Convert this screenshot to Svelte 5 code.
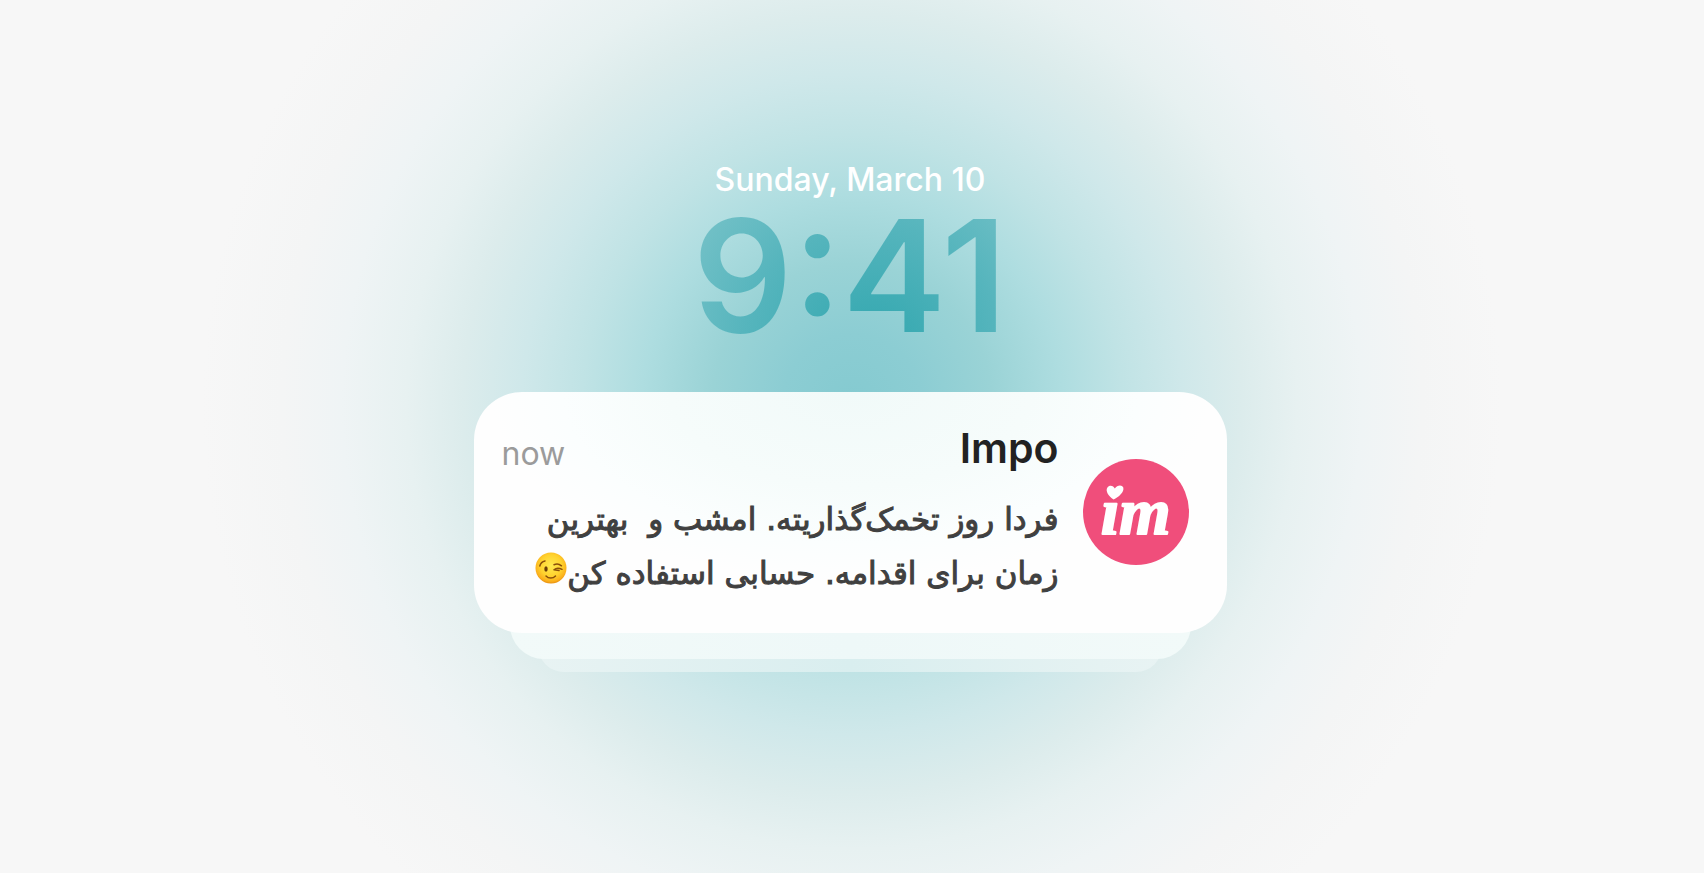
<script lang="ts">
  const date = 'Sunday, March 10';
  const time = '9:41';
  const line1 = 'فردا روز تخمک‌گذاریته. امشب و  بهترین';
  const line2 = 'زمان برای اقدامه. حسابی استفاده کن';
</script>

<main class="screen">
  <header class="lock">
    <p class="date">{date}</p>
    <time class="clock" datetime="09:41">{time}</time>
  </header>

  <section class="stack" aria-label="Notifications">
    <article class="card" dir="rtl">
      <svg class="logo" viewBox="0 0 106 106" role="img" aria-label="Impo">
        <circle cx="53" cy="53" r="53" fill="#f04e7b" />
        <text class="logo-text" x="18" y="75" direction="ltr">ım</text>
        <path d="M30.6 40.5 C25.5 37.4 22.2 32 24.3 28.7 C26.5 25.5 30.6 26.7 31.8 29.6 C34 26 39 25.3 40.3 28.6 C41.5 33 35.5 38.5 30.6 40.5 Z" fill="#fff" />
      </svg>
      <div class="content">
        <div class="head">
          <h1>Impo</h1>
          <span class="when">now</span>
        </div>
        <p class="message">
          <span class="line">{line1}</span>
          <span class="line">{line2}<svg class="wink" viewBox="0 0 32 32" role="img" aria-label="😉">
              <defs>
                <radialGradient id="face" cx="50%" cy="42%" r="58%">
                  <stop offset="0" stop-color="#ffe94f" />
                  <stop offset="0.6" stop-color="#ffd22e" />
                  <stop offset="0.88" stop-color="#fbb01c" />
                  <stop offset="1" stop-color="#e8900f" />
                </radialGradient>
              </defs>
              <circle cx="16" cy="16" r="15.5" fill="url(#face)" />
              <ellipse cx="11" cy="17" rx="1.7" ry="2.7" fill="#6b3d08" />
              <path d="M4.8 14 C5.6 11 7.6 9.5 10 9" />
              <path d="M19 12.8 C21.5 11.6 24.5 12.2 26.5 13.8" />
              <path d="M19 17.7 C21 16 24.5 16 27 17.3 M19 17.7 L24 18.6" />
              <path d="M11 24 C13.5 26.8 18 26.8 20.5 24" />
            </svg></span>
        </p>
      </div>
    </article>
    <div class="second"></div>
    <div class="third"></div>
  </section>
</main>

<style>
  :global(body) {
    margin: 0;
    background: #f7f7f7;
  }
  .screen {
    box-sizing: border-box;
    min-height: 100vh;
    padding: 160px 28px 80px 24px;
    display: flex;
    flex-direction: column;
    align-items: center;
    overflow: hidden;
    font-family: Inter, 'Liberation Sans', sans-serif;
    background: radial-gradient(
      circle at 50% 404px,
      #84cad0 0,
      #8ccdd3 70px,
      #9ad3d6 140px,
      #aedde0 210px,
      #c0e3e5 270px,
      #cfe8ea 330px,
      #dcecec 390px,
      #e7f1f1 445px,
      #eff4f5 510px,
      #f4f5f5 570px,
      #f7f7f7 650px
    );
  }
  .lock {
    display: flex;
    flex-direction: column;
    align-items: center;
  }
  .date {
    margin: 0;
    font-size: 32px;
    line-height: 40px;
    font-weight: 500;
    color: #fff;
  }
  .clock {
    font-size: 156px;
    line-height: 152px;
    font-weight: 600;
    color: transparent;
    background: radial-gradient(circle at 57% 100%, #32a6af 0, #3eacb4 50px, #56b5bd 130px, #76c2c8 220px);
    background-clip: text;
    -webkit-background-clip: text;
  }
  .stack {
    isolation: isolate;
    width: 100%;
    max-width: 753px;
    margin-top: 40px;
    display: flex;
    flex-direction: column;
    align-items: center;
  }
  .card {
    position: relative;
    z-index: 2;
    box-sizing: border-box;
    width: 100%;
    min-height: 241px;
    padding: 24px 38px 26px 28px;
    display: flex;
    align-items: center;
    gap: 24px;
    border-radius: 48px;
    background: radial-gradient(ellipse 360px 190px at 50% 0, #f1faf9 0, #f6fcfb 50%, #fbfefe 80%, #fefefe 100%);
  }
  .logo {
    width: 106px;
    height: 106px;
    flex: none;
  }
  .logo-text {
    font-family: 'Liberation Serif', serif;
    font-size: 66px;
    font-weight: 700;
    font-style: italic;
    fill: #fff;
    stroke: #fff;
    stroke-width: 2px;
    stroke-linejoin: round;
  }
  .content {
    flex: 1;
    min-width: 0;
  }
  .head {
    display: flex;
    align-items: flex-end;
    justify-content: space-between;
  }
  h1 {
    margin: 0;
    font-size: 41px;
    line-height: 48px;
    font-weight: 600;
    color: #222;
  }
  .when {
    font-size: 32px;
    line-height: 36px;
    color: #9b9b9b;
  }
  .message {
    margin: 20px 0 0;
    font-family: 'DejaVu Sans', sans-serif;
    font-size: 31px;
    line-height: 54px;
    color: #404040;
    -webkit-text-stroke: 1px #404040;
  }
  .line {
    display: block;
    white-space: pre;
  }
  .wink {
    width: 32px;
    height: 32px;
    vertical-align: 0;
  }
  .wink path {
    fill: none;
    stroke: #8a4f0a;
    stroke-width: 1.5;
    stroke-linecap: round;
  }
  .second {
    position: relative;
    z-index: 1;
    width: calc(100% - 72px);
    height: 74px;
    margin-top: -48px;
    border-radius: 0 0 34px 34px;
    background: linear-gradient(90deg, #f2faf9, #eef8f8 50%, #f2faf9);
  }
  .third {
    width: calc(100% - 129px);
    height: 40px;
    margin-top: -27px;
    border-radius: 0 0 26px 26px;
    background: linear-gradient(90deg, #e8f3f3, #d9eeef 50%, #e8f3f3);
  }
</style>
